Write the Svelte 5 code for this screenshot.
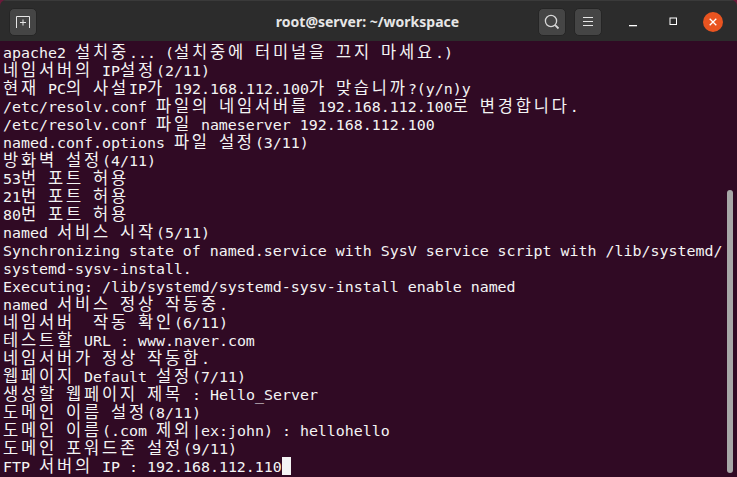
<script>
  const output = [
    'apache2 설치중... (설치중에 터미널을 끄지 마세요.)',
    '네임서버의 IP설정(2/11)',
    '현재 PC의 사설IP가 192.168.112.100가 맞습니까?(y/n)y',
    '/etc/resolv.conf 파일의 네임서버를 192.168.112.100로 변경합니다.',
    '/etc/resolv.conf 파일 nameserver 192.168.112.100',
    'named.conf.options 파일 설정(3/11)',
    '방화벽 설정(4/11)',
    '53번 포트 허용',
    '21번 포트 허용',
    '80번 포트 허용',
    'named 서비스 시작(5/11)',
    'Synchronizing state of named.service with SysV service script with /lib/systemd/',
    'systemd-sysv-install.',
    'Executing: /lib/systemd/systemd-sysv-install enable named',
    'named 서비스 정상 작동중.',
    '네임서버  작동 확인(6/11)',
    '테스트할 URL : www.naver.com',
    '네임서버가 정상 작동함.',
    '웹페이지 Default 설정(7/11)',
    '생성할 웹페이지 제목 : Hello_Server',
    '도메인 이름 설정(8/11)',
    '도메인 이름(.com 제외|ex:john) : hellohello',
    '도메인 포워드존 설정(9/11)',
    'FTP 서버의 IP : 192.168.112.110'
  ];

  // hangul takes two terminal cells, everything else one
  function runs(line) {
    return line.split(/([\uac00-\ud7a3]+)/).filter(Boolean).map((text) => ({
      text,
      wide: /[\uac00-\ud7a3]/.test(text)
    }));
  }
</script>

<div class="window">
  <header class="titlebar">
    <button class="tool" aria-label="New tab">
      <svg width="16" height="14" viewBox="0 0 16 14" fill="none" stroke="#e6e6e6" stroke-width="1">
        <path d="M1.5 13V1.5h13V13" />
        <path d="M8 4.5v6M5 7.5h6" />
      </svg>
    </button>
    <div class="title">root@server: ~/workspace</div>
    <div class="actions">
      <button class="tool" aria-label="Search">
        <svg width="16" height="16" viewBox="0 0 16 16" fill="none" stroke="#d8d8d8" stroke-width="1.3">
          <circle cx="7" cy="7" r="5.6" />
          <path d="M11.2 11.2l3.3 3.3" stroke-width="1.8" />
        </svg>
      </button>
      <button class="tool" aria-label="Menu">
        <svg width="12" height="10" viewBox="0 0 12 10" fill="none" stroke="#e6e6e6" stroke-width="1">
          <path d="M1 .5h10M1 4.5h10M1 8.5h10" />
        </svg>
      </button>
    </div>
    <div class="controls">
      <span class="ctl">
        <svg width="10" height="10" viewBox="0 0 10 10"><rect x="1" y="8" width="8" height="1.3" fill="#fff" /></svg>
      </span>
      <span class="ctl">
        <svg width="9" height="9" viewBox="0 0 9 9" fill="none" stroke="#fff" stroke-width="1"><rect x="1" y="1" width="6.5" height="6.5" /></svg>
      </span>
      <span class="ctl close">
        <svg width="8" height="8" viewBox="0 0 8 8" fill="none" stroke="#fff" stroke-width="1.3"><path d="M.7.7l6.6 6.6M7.3.7L.7 7.3" /></svg>
      </span>
    </div>
  </header>

  <main class="terminal">
    {#each output as line, i}
      <div class="line">{#each runs(line) as run}<span class:wide={run.wide}>{run.text}</span>{/each}{#if i === output.length - 1}<span class="cursor"></span>{/if}</div>
    {/each}
    <div class="scrollbar"></div>
  </main>
</div>

<style>
  :global(body) {
    margin: 0;
    background: #6b1a3a;
    overflow: hidden;
  }

  .window {
    width: 737px;
    height: 477px;
    display: flex;
    flex-direction: column;
    overflow: hidden;
    border-radius: 6px 6px 0 0;
  }

  .titlebar {
    flex: none;
    height: 41px;
    box-sizing: border-box;
    display: flex;
    align-items: center;
    padding: 1px 14px 0 9px;
    background: #2c2c2c;
    border-top: 1px solid #3a3a3a;
  }

  .tool {
    width: 28px;
    height: 28px;
    display: flex;
    align-items: center;
    justify-content: center;
    padding: 0;
    background: #454545;
    border: 1px solid #252525;
    border-radius: 5px;
  }

  .title {
    flex: 1;
    text-align: center;
    padding-left: 160px;
    font: 700 14px "Noto Sans", sans-serif;
    color: #e6e6e6;
  }

  .actions {
    display: flex;
    gap: 8px;
  }

  .controls {
    display: flex;
    gap: 20px;
    margin-left: 21px;
  }

  .ctl {
    width: 20px;
    height: 20px;
    display: flex;
    align-items: center;
    justify-content: center;
  }

  .close {
    border-radius: 50%;
    background: #e95420;
  }

  .terminal {
    position: relative;
    flex: 1;
    padding: 2px 0 0 3px;
    background: #300a24;
    color: #f4f4f4;
    font: 14.95px "DejaVu Sans Mono", monospace;
  }

  .line {
    height: 18px;
    line-height: 20px;
    white-space: pre;
    display: flex;
    align-items: baseline;
  }

  /* noto hangul advance is .92em, spacing fills up the two cells */
  .wide {
    font-family: "Noto Sans CJK KR", sans-serif;
    font-size: 16.5px;
    line-height: 12px;
    letter-spacing: 2.82px;
  }

  .cursor {
    align-self: flex-start;
    width: 9px;
    height: 18px;
    background: #f4f4f4;
  }

  .scrollbar {
    position: absolute;
    top: 149px;
    right: 4px;
    bottom: 4px;
    width: 6px;
    border-radius: 3px;
    background: #a8a8a8;
  }
</style>
